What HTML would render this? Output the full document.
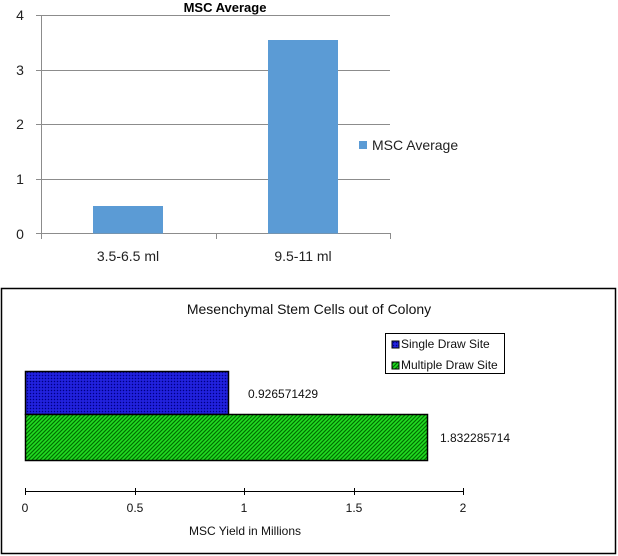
<!DOCTYPE html>
<html><head><meta charset="utf-8"><style>
html,body{margin:0;padding:0;background:#fff;width:618px;height:556px;overflow:hidden}
svg{display:block}
</style></head><body>
<svg width="618" height="556" xmlns="http://www.w3.org/2000/svg">
<defs>
<pattern id="pb" width="3" height="3" patternUnits="userSpaceOnUse">
<rect width="3" height="3" fill="#1a1ad0"/><rect width="1" height="1" fill="#000080"/><rect x="1.5" y="1.5" width="1" height="1" fill="#3a3aff"/>
</pattern>
<pattern id="pg" width="4" height="4" patternUnits="userSpaceOnUse">
<rect width="4" height="4" fill="#22dd22"/><path d="M0 4L4 0M-1 1L1 -1M3 5L5 3" stroke="#007000" stroke-width="1.2"/>
</pattern>
</defs>
<g font-family="Liberation Sans, sans-serif">
<!-- top chart -->
<g stroke="#8c8c8c" stroke-width="1">
<line x1="36" y1="15.5" x2="390" y2="15.5"/>
<line x1="36" y1="70.5" x2="390" y2="70.5"/>
<line x1="36" y1="124.5" x2="390" y2="124.5"/>
<line x1="36" y1="179.5" x2="390" y2="179.5"/>
<line x1="36" y1="233.5" x2="390" y2="233.5"/>
<line x1="41.5" y1="15" x2="41.5" y2="239"/>
<line x1="216.5" y1="233" x2="216.5" y2="239"/>
<line x1="390.5" y1="233" x2="390.5" y2="239"/>
</g>
<rect x="93" y="206" width="70" height="27.5" fill="#5b9bd5"/>
<rect x="268" y="40" width="70" height="193.5" fill="#5b9bd5"/>
<text x="225" y="12" font-size="13" font-weight="bold" text-anchor="middle">MSC Average</text>
<g font-size="14" fill="#222" text-anchor="middle">
<text x="20" y="20">4</text><text x="20" y="75">3</text><text x="20" y="129">2</text><text x="20" y="184">1</text><text x="20" y="239">0</text>
<text x="128" y="261">3.5-6.5 ml</text><text x="303" y="261">9.5-11 ml</text>
</g>
<rect x="359" y="141" width="8" height="8" fill="#5b9bd5"/>
<text x="372" y="150" font-size="14" fill="#222">MSC Average</text>
<!-- bottom chart -->
<rect x="1.5" y="288.5" width="614" height="265" fill="none" stroke="#000" stroke-width="1.5"/>
<text x="309" y="314" font-size="14" text-anchor="middle" fill="#111">Mesenchymal Stem Cells out of Colony</text>
<rect x="385.5" y="333.5" width="119" height="40" fill="#fff" stroke="#000"/>
<rect x="392" y="341" width="7" height="7" fill="url(#pb)" stroke="#000"/>
<text x="401" y="348" font-size="12" fill="#111">Single Draw Site</text>
<rect x="392" y="362" width="7" height="7" fill="url(#pg)" stroke="#000"/>
<text x="401" y="369" font-size="12" fill="#111">Multiple Draw Site</text>
<rect x="25.5" y="371.5" width="203" height="43" fill="url(#pb)" stroke="#000" stroke-width="1.5"/>
<rect x="25.5" y="414.5" width="402" height="46" fill="url(#pg)" stroke="#000" stroke-width="1.5"/>
<text x="248" y="398" font-size="12" fill="#111">0.926571429</text>
<text x="440" y="442" font-size="12" fill="#111">1.832285714</text>
<g stroke="#000">
<line x1="25" y1="491.5" x2="463" y2="491.5"/>
<line x1="25.5" y1="488" x2="25.5" y2="495"/>
<line x1="135.5" y1="488" x2="135.5" y2="495"/>
<line x1="244.5" y1="488" x2="244.5" y2="495"/>
<line x1="354.5" y1="488" x2="354.5" y2="495"/>
<line x1="463.5" y1="488" x2="463.5" y2="495"/>
</g>
<g font-size="12" text-anchor="middle" fill="#111">
<text x="25" y="512">0</text><text x="135" y="512">0.5</text><text x="244" y="512">1</text><text x="354" y="512">1.5</text><text x="463" y="512">2</text>
</g>
<text x="245" y="535" font-size="12" text-anchor="middle" fill="#111">MSC Yield in Millions</text>
</g>
</svg>
</body></html>
